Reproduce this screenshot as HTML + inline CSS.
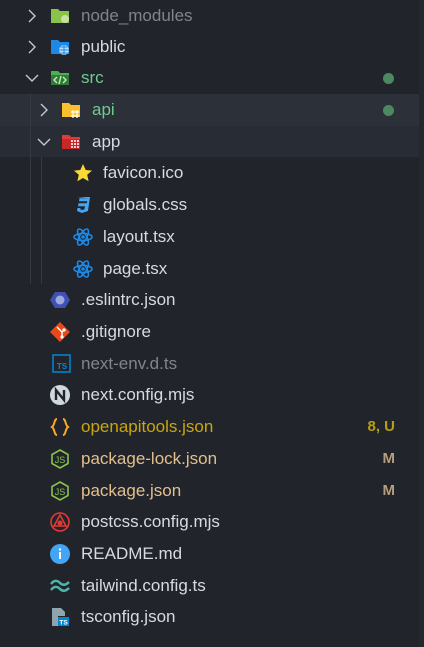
<!DOCTYPE html>
<html><head><meta charset="utf-8"><style>
body{margin:0;width:424px;height:647px;background:#21252b;font-family:"Liberation Sans",sans-serif;font-size:17px;color:#d7dae0;position:relative;overflow:hidden}
.r{position:absolute;left:0;width:419px;height:32px;line-height:32px}
.t{position:absolute;top:0}
.ic{position:absolute;top:6px;width:20px;height:20px}
.ch{position:absolute;top:9px;width:14px;height:14px}
.badge{position:absolute;right:24px;top:0;font-weight:bold;font-size:15px}
.dot{position:absolute;left:383px;top:11px;width:11px;height:11px;border-radius:50%;background:#4b8a60}
.g{position:absolute;width:1px;background:#353a42}
</style></head><body>
<div style="position:absolute;left:0;top:94px;width:419px;height:32px;background:#2c3038"></div>
<div style="position:absolute;left:0;top:126px;width:419px;height:31px;background:#282c34"></div>
<div style="position:absolute;left:419px;top:0;width:5px;height:647px;background:#23272e"></div>
<div class="g" style="left:30px;top:94px;height:190px"></div>
<div class="g" style="left:41px;top:157px;height:127px"></div>

<svg width="0" height="0" style="position:absolute"><defs>
<symbol id="cr" viewBox="0 0 14 14"><path d="M4 1l6 6-6 6" fill="none" stroke="#c5c8ce" stroke-width="1.4"/></symbol>
<symbol id="cd" viewBox="0 0 14 14"><path d="M1 4l6 6 6-6" fill="none" stroke="#c5c8ce" stroke-width="1.4"/></symbol>
<symbol id="react" viewBox="0 0 20 20"><g fill="none" stroke="#1e88e5" stroke-width="1.6"><ellipse cx="10" cy="10" rx="9" ry="3.5"/><ellipse cx="10" cy="10" rx="9" ry="3.5" transform="rotate(60 10 10)"/><ellipse cx="10" cy="10" rx="9" ry="3.5" transform="rotate(120 10 10)"/></g><circle cx="10" cy="10" r="1.8" fill="#1e88e5"/></symbol>
<symbol id="js" viewBox="0 0 20 20"><path d="M10 1l8 4.5v9L10 19l-8-4.5v-9z" fill="none" stroke="#8bc34a" stroke-width="1.6"/><text x="10" y="14" font-size="9" fill="#8bc34a" text-anchor="middle" font-family="Liberation Sans">JS</text></symbol>
</defs></svg>

<div class="r" style="top:0"><svg class="ch" style="left:25px"><use href="#cr"/></svg>
<svg class="ic" style="left:50px" viewBox="0 0 20 20"><path d="M1 3h7l2 2h9v12H1z" fill="#8bc34a"/><circle cx="15" cy="13" r="4" fill="#c5e1a5"/></svg>
<span class="t" style="left:81px;color:#7f848e">node_modules</span></div>

<div class="r" style="top:31px"><svg class="ch" style="left:25px"><use href="#cr"/></svg>
<svg class="ic" style="left:50px" viewBox="0 0 20 20"><path d="M1 3h7l2 2h9v12H1z" fill="#1e88e5"/><circle cx="14" cy="13" r="5" fill="#bbdefb"/><path d="M9 13h10M14 8v10M10.5 10h7M10.5 16h7" stroke="#1e88e5" stroke-width="1"/></svg>
<span class="t" style="left:81px">public</span></div>

<div class="r" style="top:62px"><svg class="ch" style="left:25px"><use href="#cd"/></svg>
<svg class="ic" style="left:50px" viewBox="0 0 20 20"><path d="M1 3h7l2 2h9v12H1z" fill="#4caf50"/><path d="M1 7h18v10H1z" fill="#2e7d32"/><path d="M7 9l-3 3 3 3M13 9l3 3-3 3M11 8l-2 8" stroke="#c8e6c9" stroke-width="1.4" fill="none"/></svg>
<span class="t" style="left:81px;color:#73c991">src</span><div class="dot"></div></div>

<div class="r" style="top:94px"><svg class="ch" style="left:37px"><use href="#cr"/></svg>
<svg class="ic" style="left:61px" viewBox="0 0 20 20"><path d="M1 3h7l2 2h9v12H1z" fill="#fbc02d"/><path d="M12 10v8M16 10v8M10 12h8M10 16h8" stroke="#fff8e1" stroke-width="1.4"/></svg>
<span class="t" style="left:92px;color:#73c991">api</span><div class="dot"></div></div>

<div class="r" style="top:126px"><svg class="ch" style="left:37px"><use href="#cd"/></svg>
<svg class="ic" style="left:61px" viewBox="0 0 20 20"><path d="M1 3h7l2 2h9v12H1z" fill="#e53935"/><path d="M1 7h18v10H1z" fill="#c62828"/><g fill="#ffcdd2"><rect x="10" y="8" width="2" height="2"/><rect x="13" y="8" width="2" height="2"/><rect x="16" y="8" width="2" height="2"/><rect x="10" y="11" width="2" height="2"/><rect x="13" y="11" width="2" height="2"/><rect x="16" y="11" width="2" height="2"/><rect x="10" y="14" width="2" height="2"/><rect x="13" y="14" width="2" height="2"/><rect x="16" y="14" width="2" height="2"/></g></svg>
<span class="t" style="left:92px">app</span></div>

<div class="r" style="top:157px"><svg class="ic" style="left:73px" viewBox="0 0 20 20"><path d="M10 1l2.7 6 6.3.6-4.8 4.2 1.4 6.4L10 15l-5.6 3.2 1.4-6.4L1 7.6 7.3 7z" fill="#fdd835"/></svg>
<span class="t" style="left:103px">favicon.ico</span></div>

<div class="r" style="top:189px"><svg class="ic" style="left:73px" viewBox="0 0 20 20"><path d="M4 2h13l-2 14-6 2-5-2 .5-3h3l-.3 1.3 2 .7 2.3-.7.5-3H5l.5-3h8.3l.4-2H6l.5-3h8.3" fill="#42a5f5"/></svg>
<span class="t" style="left:103px">globals.css</span></div>

<div class="r" style="top:221px"><svg class="ic" style="left:73px"><use href="#react"/></svg><span class="t" style="left:103px">layout.tsx</span></div>
<div class="r" style="top:253px"><svg class="ic" style="left:73px"><use href="#react"/></svg><span class="t" style="left:103px">page.tsx</span></div>

<div class="r" style="top:284px"><svg class="ic" style="left:50px" viewBox="0 0 20 20"><path d="M5 2h10l5 8-5 8H5L0 10z" fill="#3f51b5"/><circle cx="10" cy="10" r="4.5" fill="#9fa8da"/></svg><span class="t" style="left:81px">.eslintrc.json</span></div>

<div class="r" style="top:316px"><svg class="ic" style="left:50px" viewBox="0 0 20 20"><path d="M10 0l10 10-10 10L0 10z" fill="#e64a19"/><path d="M7 5l5 5v5M12 10l2-2" stroke="#fff" stroke-width="1.4" fill="none"/><circle cx="12" cy="15" r="1.6" fill="#fff"/><circle cx="14" cy="8" r="1.6" fill="#fff"/></svg><span class="t" style="left:81px">.gitignore</span></div>

<div class="r" style="top:348px"><svg class="ic" style="left:52px" viewBox="0 0 20 20"><rect x="1" y="1" width="17" height="17" fill="none" stroke="#0288d1" stroke-width="1.5"/><text x="10" y="15" font-size="8" font-weight="bold" fill="#0288d1" text-anchor="middle" font-family="Liberation Sans">TS</text></svg><span class="t" style="left:81px;color:#7f848e">next-env.d.ts</span></div>

<div class="r" style="top:379px"><svg class="ic" style="left:50px" viewBox="0 0 20 20"><circle cx="10" cy="10" r="10" fill="#cfd8dc"/><path d="M6 15V5l8 10V5" stroke="#21252b" stroke-width="2.4" fill="none"/></svg><span class="t" style="left:81px">next.config.mjs</span></div>

<div class="r" style="top:411px"><svg class="ic" style="left:50px" viewBox="0 0 20 20"><path d="M7 2C4 2 5 8 2 10c3 2 2 8 5 8M13 2c3 0 2 6 5 8-3 2-2 8-5 8" stroke="#f9a825" stroke-width="2" fill="none"/></svg><span class="t" style="left:81px;color:#c9a60c">openapitools.json</span><span class="badge" style="color:#b89e10">8, U</span></div>

<div class="r" style="top:443px"><svg class="ic" style="left:50px"><use href="#js"/></svg><span class="t" style="left:81px;color:#e2c08d">package-lock.json</span><span class="badge" style="color:#b49e80">M</span></div>
<div class="r" style="top:475px"><svg class="ic" style="left:50px"><use href="#js"/></svg><span class="t" style="left:81px;color:#e2c08d">package.json</span><span class="badge" style="color:#b49e80">M</span></div>

<div class="r" style="top:506px"><svg class="ic" style="left:50px" viewBox="0 0 20 20"><circle cx="10" cy="10" r="9" fill="none" stroke="#e53935" stroke-width="1.6"/><path d="M10 3l6 11H4z" fill="none" stroke="#e53935" stroke-width="1.6"/><circle cx="10" cy="11" r="2.5" fill="#e53935"/></svg><span class="t" style="left:81px">postcss.config.mjs</span></div>

<div class="r" style="top:538px"><svg class="ic" style="left:50px" viewBox="0 0 20 20"><circle cx="10" cy="10" r="10" fill="#42a5f5"/><rect x="9" y="8" width="2" height="7" fill="#fff"/><circle cx="10" cy="5.5" r="1.2" fill="#fff"/></svg><span class="t" style="left:81px">README.md</span></div>

<div class="r" style="top:570px"><svg class="ic" style="left:50px" viewBox="0 0 20 20"><path d="M1 8c3-4 6-4 9-1s6 2 9-1M1 14c3-4 6-4 9-1s6 2 9-1" stroke="#4db6ac" stroke-width="2.4" fill="none"/></svg><span class="t" style="left:81px">tailwind.config.ts</span></div>

<div class="r" style="top:601px"><svg class="ic" style="left:50px" viewBox="0 0 20 20"><path d="M2 1h9l4 4v4H2z" fill="#90a4ae"/><rect x="2" y="9" width="6" height="10" fill="#90a4ae"/><rect x="8" y="10" width="11" height="9" fill="#0288d1"/><text x="13.5" y="17.5" font-size="6.5" font-weight="bold" fill="#fff" text-anchor="middle" font-family="Liberation Sans">TS</text></svg><span class="t" style="left:81px">tsconfig.json</span></div>
</body></html>
